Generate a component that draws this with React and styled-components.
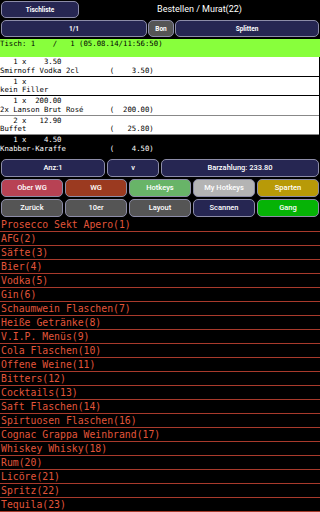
import styled, { createGlobalStyle } from 'styled-components'

const GlobalStyle = createGlobalStyle`
  body {
    margin: 0;
    background: #000;
    font-family: Roboto, 'Liberation Sans', sans-serif;
  }
`

const COLORS = {
  navy: '#262652',
  grey: '#555555',
  crimson: '#b84254',
  brick: '#9b3a20',
  leaf: '#68b468',
  silver: '#b4b4b4',
  gold: '#b89a08',
  green: '#06b306',
}

// Styles
const Screen = styled('div')`
  width: 320px;
  height: 512px;
  overflow: hidden;
  background: #000;
  display: flex;
  flex-flow: column nowrap;
  padding-top: 1px;
  box-sizing: border-box;
`
const TopBar = styled('div')`
  display: flex;
  align-items: center;
  height: 17px;
  padding-left: 1px;
`
const Title = styled('div')`
  flex-grow: 1;
  text-align: center;
  color: #fff;
  font-size: 9px;
  padding-bottom: 1px;
`
const Btn = styled('div')`
  display: flex;
  align-items: center;
  justify-content: center;
  box-sizing: border-box;
  height: ${({ $h }) => $h || 18}px;
  width: ${({ $w }) => ($w ? `${$w}px` : 'auto')};
  background: ${({ $bg }) => COLORS[$bg] || COLORS.navy};
  border: 1px solid #8c8ca8;
  border-radius: 5px;
  color: #fff;
  font-size: ${({ $small }) => ($small ? 6.5 : 7.5)}px;
  font-weight: ${({ $small }) => ($small ? 700 : 500)};
  white-space: nowrap;
`
const ActionRow = styled('div')`
  display: grid;
  grid-template-columns: 146px 26px 1fr;
  gap: 1px;
  margin-top: 2px;
  padding: 0 1px;
`
const TableBar = styled('div')`
  margin-top: 2px;
  height: 18px;
  background: #88ff3c;
  font-family: 'DejaVu Sans Mono', monospace;
  font-size: 7.3px;
  line-height: 9px;
  color: #000;
  white-space: pre;
`
const Orders = styled('div')`
  display: flex;
  flex-flow: column nowrap;
  margin-right: 1px;
`
const OrderRow = styled('div')`
  height: 19.5px;
  box-sizing: border-box;
  padding-top: 1px;
  background: ${({ $active }) => ($active ? '#000' : '#fff')};
  color: ${({ $active }) => ($active ? '#fff' : '#000')};
  border-bottom: 1px solid ${({ $line }) => $line};
  font-family: 'DejaVu Sans Mono', monospace;
  font-size: 7.3px;
  line-height: 8.5px;
  white-space: pre;
`
const Keypad = styled('div')`
  display: grid;
  grid-template-columns: ${({ $cols }) => $cols};
  gap: 2px;
  padding: 0 1px;
  margin-top: ${({ $mt }) => $mt}px;
`
const Categories = styled('div')`
  margin-top: 1px;
  display: flex;
  flex-flow: column nowrap;
`
const Category = styled('div')`
  height: 14px;
  box-sizing: border-box;
  border-bottom: 1px solid #a83a2c;
  color: #e2553a;
  font-family: 'DejaVu Sans Mono', monospace;
  font-size: 9.8px;
  line-height: 13px;
  padding-left: 1px;
  white-space: pre;
`

const pad = (s, n) => String(s).padStart(n, ' ')

const orders = [
  { qty: 1, price: '3.50', name: 'Smirnoff Vodka 2cl', total: '3.50', line: '#000' },
  { qty: 1, price: '', name: 'kein Filler', total: '', line: '#000' },
  { qty: 1, price: '200.00', name: '2x Lanson Brut Rosé', total: '200.00', line: '#888' },
  { qty: 2, price: '12.90', name: 'Buffet', total: '25.80', line: '#888' },
  { qty: 1, price: '4.50', name: 'Knabber-Karaffe', total: '4.50', line: '#000', active: true },
]

const categories = [
  'Prosecco Sekt Apero(1)',
  'AFG(2)',
  'Säfte(3)',
  'Bier(4)',
  'Vodka(5)',
  'Gin(6)',
  'Schaumwein Flaschen(7)',
  'Heiße Getränke(8)',
  'V.I.P. Menüs(9)',
  'Cola Flaschen(10)',
  'Offene Weine(11)',
  'Bitters(12)',
  'Cocktails(13)',
  'Saft Flaschen(14)',
  'Spirtuosen Flaschen(16)',
  'Cognac Grappa Weinbrand(17)',
  'Whiskey Whisky(18)',
  'Rum(20)',
  'Licöre(21)',
  'Spritz(22)',
  'Tequila(23)',
]

const menuKeys = [
  ['Ober WG', 'crimson'],
  ['WG', 'brick'],
  ['Hotkeys', 'leaf'],
  ['My Hotkeys', 'silver'],
  ['Sparten', 'gold'],
  ['Zurück', 'grey'],
  ['10er', 'grey'],
  ['Layout', 'grey'],
  ['Scannen', 'navy'],
  ['Gang', 'green'],
]

// Component
const App = () => (
  <Screen>
    <GlobalStyle />
    <TopBar>
      <Btn $w={78} $h={17} $small>Tischliste</Btn>
      <Title>Bestellen / Murat(22)</Title>
    </TopBar>
    <ActionRow>
      <Btn $h={17} $small>1/1</Btn>
      <Btn $h={17} $bg="grey" $small>Bon</Btn>
      <Btn $h={17} $small>Splitten</Btn>
    </ActionRow>
    <TableBar>{'Tisch: 1    /   1 (05.08.14/11:56:50)'}</TableBar>
    <Orders>
      {orders.map(o => (
        <OrderRow key={o.name} $line={o.line} $active={o.active}>
          {`${pad(o.qty, 4)} x ${pad(o.price, 7)}\n`}
          {o.total ? `${o.name.padEnd(25, ' ')}(${pad(o.total, 8)})` : o.name}
        </OrderRow>
      ))}
    </Orders>
    <Keypad $cols="104px 52px 1fr" $mt={4}>
      <Btn>Anz:1</Btn>
      <Btn>v</Btn>
      <Btn>Barzahlung: 233.80</Btn>
    </Keypad>
    <Keypad $cols="repeat(5, 1fr)" $mt={2}>
      {menuKeys.map(([label, bg]) => (
        <Btn key={label} $bg={bg}>{label}</Btn>
      ))}
    </Keypad>
    <Categories>
      {categories.map(c => (
        <Category key={c}>{c}</Category>
      ))}
    </Categories>
  </Screen>
)

export default App
